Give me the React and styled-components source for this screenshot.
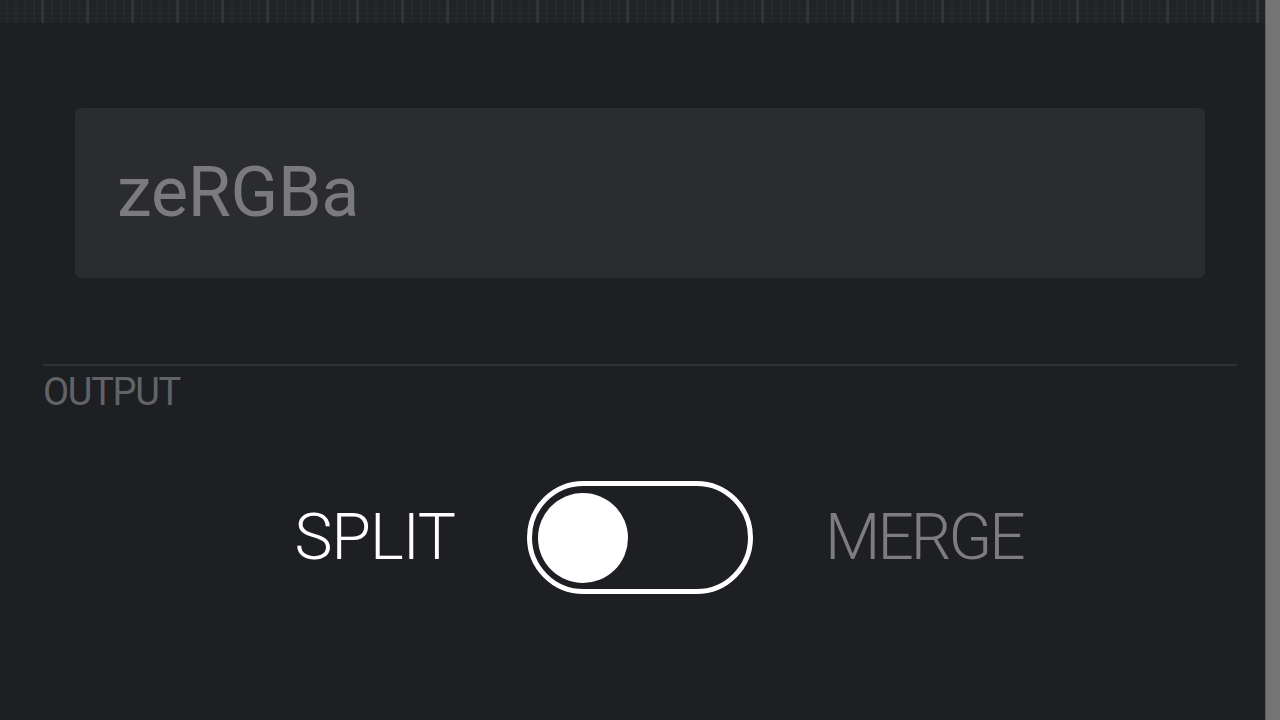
import styled, { createGlobalStyle } from "styled-components";

const GlobalStyle = createGlobalStyle`
  html, body {
    margin: 0;
    padding: 0;
    background: #1e1f23;
    overflow: hidden;
  }
  body {
    font-family: Roboto, "Liberation Sans", sans-serif;
  }
`;

const Page = styled.div`
  display: flex;
  width: 1280px;
  height: 720px;
  background: #1e1f23;
`;

const Main = styled.div`
  flex: 1;
  display: flex;
  flex-direction: column;
`;

const TopStrip = styled.div`
  height: 23px;
  background-color: #222327;
  background-image:
    repeating-linear-gradient(90deg, transparent 0 42px, rgba(255, 255, 255, 0.06) 42px 45px),
    repeating-linear-gradient(90deg, transparent 0 7px, rgba(255, 255, 255, 0.025) 7px 9px),
    repeating-linear-gradient(0deg, transparent 0 4px, rgba(255, 255, 255, 0.02) 4px 5px);
  background-position: -1px 0;
`;

const Content = styled.div`
  padding: 85px 28px 0 43px;
  display: flex;
  flex-direction: column;
`;

const NameField = styled.div`
  margin: 0 32px;
  height: 170px;
  border-radius: 6px;
  background: #2b2c30;
  display: flex;
  align-items: center;
  padding: 0 0 2px 42px;
  box-sizing: border-box;
  font-size: 70px;
  color: #7b7b7d;
  letter-spacing: -0.3px;
`;

const Divider = styled.div`
  margin-top: 86px;
  height: 2px;
  background: #323337;
`;

const SectionLabel = styled.div`
  margin-top: 6px;
  font-size: 38px;
  line-height: 40px;
  color: #626367;
  letter-spacing: -1.3px;
`;

const ToggleRow = styled.div`
  margin-top: 69px;
  display: grid;
  grid-template-columns: 1fr auto 1fr;
  align-items: center;
  column-gap: 72px;
`;

const Option = styled.span`
  font-size: 64px;
  font-weight: 300;
  letter-spacing: ${(p) => (p.$active ? "-1px" : "-3px")};
  color: ${(p) => (p.$active ? "#ffffff" : "#7d7d7f")};
  justify-self: ${(p) => (p.$side === "left" ? "end" : "start")};
`;

const Switch = styled.div`
  box-sizing: border-box;
  width: 226px;
  height: 113px;
  border: 5px solid #ffffff;
  border-radius: 57px;
  padding: 6px;
  display: flex;
  align-items: center;
`;

const Knob = styled.div`
  width: 90px;
  height: 90px;
  border-radius: 50%;
  background: #ffffff;
`;

const Scrollbar = styled.div`
  width: 15px;
  background: #747474;
  border-left: 1px solid #5f5f60;
  box-sizing: border-box;
`;

export default function App() {
  return (
    <>
      <GlobalStyle />
      <Page>
        <Main>
          <TopStrip />
          <Content>
            <NameField>zeRGBa</NameField>
            <Divider />
            <SectionLabel>OUTPUT</SectionLabel>
            <ToggleRow>
              <Option $side="left" $active>SPLIT</Option>
              <Switch>
                <Knob />
              </Switch>
              <Option $side="right">MERGE</Option>
            </ToggleRow>
          </Content>
        </Main>
        <Scrollbar />
      </Page>
    </>
  );
}
